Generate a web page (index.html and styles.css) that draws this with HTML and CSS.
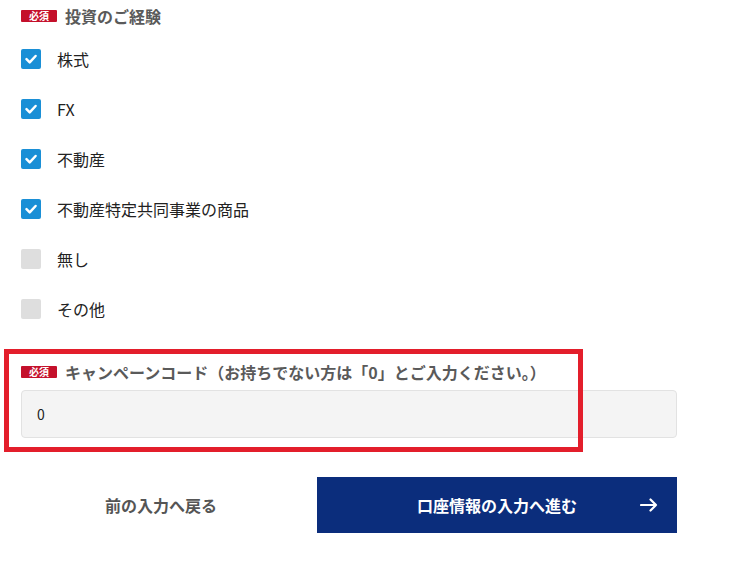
FILE: index.html
```html
<!DOCTYPE html>
<html lang="ja">
<head>
<meta charset="utf-8">
<link rel="stylesheet" href="styles.css">
</head>
<body>
<div class="form">
  <div class="field-head">
    <span class="badge">必須</span>
    <span class="field-title">投資のご経験</span>
  </div>
  <ul class="checks">
    <li class="check-row"><span class="box on"><svg viewBox="0 0 20 20"><path d="M5.5 10.2 L8.7 13.3 L14.6 7" /></svg></span><span class="check-label">株式</span></li>
    <li class="check-row"><span class="box on"><svg viewBox="0 0 20 20"><path d="M5.5 10.2 L8.7 13.3 L14.6 7" /></svg></span><span class="check-label">FX</span></li>
    <li class="check-row"><span class="box on"><svg viewBox="0 0 20 20"><path d="M5.5 10.2 L8.7 13.3 L14.6 7" /></svg></span><span class="check-label">不動産</span></li>
    <li class="check-row"><span class="box on"><svg viewBox="0 0 20 20"><path d="M5.5 10.2 L8.7 13.3 L14.6 7" /></svg></span><span class="check-label">不動産特定共同事業の商品</span></li>
    <li class="check-row"><span class="box"></span><span class="check-label">無し</span></li>
    <li class="check-row"><span class="box"></span><span class="check-label">その他</span></li>
  </ul>
  <div class="campaign">
    <div class="highlight"></div>
    <div class="field-head">
      <span class="badge">必須</span>
      <span class="field-title">キャンペーンコード（お持ちでない方は「0」とご入力ください。）</span>
    </div>
    <div class="input">0</div>
  </div>
  <div class="actions">
    <div class="back">前の入力へ戻る</div>
    <div class="next"><span class="next-text">口座情報の入力へ進む</span><svg class="arrow" viewBox="0 0 18 14"><path d="M1 7 H16 M10.5 1.5 L16 7 L10.5 12.5" /></svg></div>
  </div>
</div>
</body>
</html>
```
FILE: styles.css
```css
html, body {
  margin: 0;
  padding: 0;
  background: #fff;
}
body {
  font-family: "Noto Sans CJK JP", "Noto Sans", sans-serif;
  color: #222;
}
.form {
  width: 656px;
  padding-left: 21px;
}
.field-head {
  display: flex;
  align-items: center;
  height: 32px;
}
.badge {
  display: inline-flex;
  align-items: center;
  justify-content: center;
  width: 36px;
  height: 12px;
  background: #c4102b;
  color: #fff;
  font-size: 10px;
  font-weight: 700;
  line-height: 12px;
  border-radius: 1px;
  margin-right: 8px;
}
.field-title {
  font-size: 16px;
  font-weight: 700;
  color: #5a5a5a;
  line-height: 32px;
}
.checks {
  list-style: none;
  margin: 0;
  padding: 2px 0 0 0;
}
.check-row {
  display: flex;
  align-items: center;
  height: 50px;
}
.box {
  width: 20px;
  height: 20px;
  border-radius: 2px;
  background: #dedede;
  margin-right: 16px;
  flex: none;
}
.box.on {
  background: #1a8fd6;
}
.box svg {
  display: block;
  width: 20px;
  height: 20px;
}
.box svg path {
  fill: none;
  stroke: #fff;
  stroke-width: 2.5;
  stroke-linecap: round;
  stroke-linejoin: round;
}
.check-label {
  font-size: 16px;
  color: #222;
}
.campaign {
  position: relative;
  margin-top: 22px;
}
.highlight {
  position: absolute;
  left: -17px;
  top: -7px;
  width: 569px;
  height: 93px;
  border: 5px solid #e31e2b;
}
.input {
  margin-top: 2px;
  height: 46px;
  background: #f4f4f4;
  border: 1px solid #e2e2e2;
  border-radius: 4px;
  padding-left: 15px;
  display: flex;
  align-items: center;
  font-size: 14px;
  color: #222;
}
.actions {
  display: grid;
  grid-template-columns: 280px 1fr;
  column-gap: 16px;
  margin-top: 39px;
  height: 56px;
}
.back {
  display: flex;
  align-items: center;
  justify-content: center;
  font-size: 16px;
  font-weight: 700;
  color: #555;
}
.next {
  position: relative;
  display: flex;
  align-items: center;
  justify-content: center;
  background: #0b2d7c;
  color: #fff;
  font-size: 16px;
  font-weight: 700;
}
.arrow {
  position: absolute;
  right: 19px;
  top: 21px;
  width: 18px;
  height: 14px;
}
.arrow path {
  fill: none;
  stroke: #fff;
  stroke-width: 2.2;
  stroke-linecap: round;
  stroke-linejoin: round;
}
```
